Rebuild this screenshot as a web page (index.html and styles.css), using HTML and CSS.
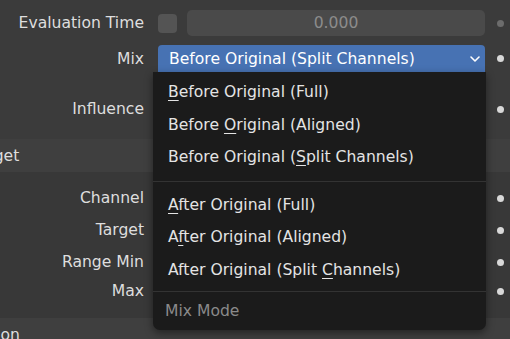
FILE: index.html
```html
<!DOCTYPE html>
<html lang="en">
<head>
    <meta charset="UTF-8">
    <title>Action Constraint</title>
    <link rel="stylesheet" href="styles.css">
</head>
<body>
    <div class="panel">
        <div class="body top">
            <div class="row row-eval">
                <div class="label">Evaluation Time</div>
                <div class="controls">
                    <div class="check"></div>
                    <div class="field">0.000</div>
                </div>
                <div class="dot dim"></div>
            </div>
            <div class="row row-mix">
                <div class="label">Mix</div>
                <div class="controls">
                    <div class="select">
                        <span>Before Original (Split Channels)</span>
                        <svg width="12" height="8" viewBox="0 0 12 8"><path d="M2 2 L6 6 L10 2" fill="none" stroke="#fff" stroke-width="1.6" stroke-linecap="round" stroke-linejoin="round"/></svg>
                    </div>
                </div>
                <div class="dot"></div>
            </div>
            <div class="row row-infl">
                <div class="label">Influence</div>
                <div class="controls"></div>
                <div class="dot"></div>
            </div>
        </div>

        <div class="header"><span>Target</span></div>

        <div class="body sub">
            <div class="row row-chan">
                <div class="label">Channel</div>
                <div class="controls"></div>
                <div class="dot"></div>
            </div>
            <div class="row row-target">
                <div class="label">Target</div>
                <div class="controls"></div>
                <div class="dot"></div>
            </div>
            <div class="row row-min">
                <div class="label">Range Min</div>
                <div class="controls"></div>
                <div class="dot"></div>
            </div>
            <div class="row row-max">
                <div class="label">Max</div>
                <div class="controls"></div>
                <div class="dot"></div>
            </div>
        </div>

        <div class="header"><span>Action</span></div>

        <div class="menu">
            <div class="item"><u>B</u>efore Original (Full)</div>
            <div class="item">Before <u>O</u>riginal (Aligned)</div>
            <div class="item">Before Original (<u>S</u>plit Channels)</div>
            <div class="sep"></div>
            <div class="item"><u>A</u>fter Original (Full)</div>
            <div class="item">A<u>f</u>ter Original (Aligned)</div>
            <div class="item">After Original (Split <u>C</u>hannels)</div>
            <div class="sep short"></div>
            <div class="title">Mix Mode</div>
        </div>
    </div>
</body>
</html>
```

FILE: styles.css
```css
* {
    box-sizing: border-box;
}
body {
    margin: 0;
    background-color: #3b3b3b;
    font-family: "DejaVu Sans", sans-serif;
    font-size: 15.6px;
    color: #dedede;
    overflow: hidden;
}
.panel {
    position: relative;
    width: 510px;
    height: 339px;
}
.body.top {
    background-color: #3b3b3b;
    padding-top: 10px;
    height: 139px;
}
.body.sub {
    background-color: #383838;
    height: 146px;
    padding-top: 13px;
}
.header {
    background-color: #3f3f3f;
    height: 33px;
    display: flex;
    align-items: center;
    padding-top: 1px;
}
.header span {
    margin-left: -29px;
}
.row {
    display: flex;
    align-items: center;
    height: 26px;
}
.label {
    width: 144px;
    text-align: right;
    flex-shrink: 0;
}
.controls {
    display: flex;
    align-items: center;
    margin-left: 14px;
    width: 327px;
    height: 100%;
}
.dot {
    width: 7px;
    height: 7px;
    border-radius: 50%;
    background-color: #d8d8d8;
    margin-left: 12px;
}
.dot.dim {
    background-color: #6c6c6c;
}
.row-mix {
    margin-top: 9px;
    height: 27px;
}
.row-infl {
    margin-top: 24px;
}
.row-target {
    margin-top: 6px;
}
.row-min {
    margin-top: 6px;
}
.row-max {
    margin-top: 3px;
}
.check {
    width: 19px;
    height: 19px;
    border-radius: 4px;
    background-color: #545454;
}
.field {
    flex: 1;
    margin-left: 10px;
    height: 26px;
    border-radius: 5px;
    background-color: #4a4a4a;
    color: #8c8c8c;
    display: flex;
    align-items: center;
    justify-content: center;
}
.select {
    flex: 1;
    height: 27px;
    background-color: #4772b3;
    border-radius: 4px 4px 0 0;
    color: #ffffff;
    display: flex;
    align-items: center;
    justify-content: space-between;
    padding: 0 4px 0 11px;
}
.menu {
    position: absolute;
    left: 153px;
    top: 72px;
    width: 333px;
    height: 258px;
    background-color: #1b1b1b;
    border-radius: 0 0 7px 7px;
    box-shadow: 0 3px 8px rgba(0, 0, 0, 0.45);
    padding-top: 4px;
}
.item {
    height: 32.5px;
    line-height: 32.5px;
    padding-left: 15px;
    color: #e4e4e4;
    white-space: nowrap;
}
.item u {
    text-decoration-thickness: 1px;
    text-underline-offset: 3px;
}
.sep {
    height: 1px;
    background-color: #333333;
    margin: 7px 0 7px;
}
.sep.short {
    margin: 5px 0 0;
}
.title {
    height: 30px;
    line-height: 30px;
    padding-top: 4px;
    padding-left: 12px;
    color: #8a8a8a;
}
```
